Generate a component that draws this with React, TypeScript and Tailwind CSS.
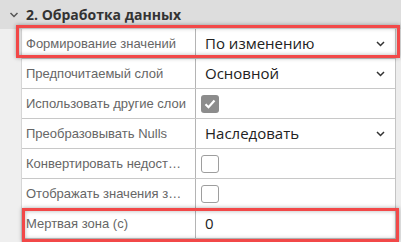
import React from 'react';

type Row =
  | { label: string; kind: 'select'; value: string }
  | { label: string; kind: 'text'; value: string }
  | { label: string; kind: 'check'; checked: boolean };

const rows: Row[] = [
  { label: 'Формирование значений', kind: 'select', value: 'По изменению' },
  { label: 'Предпочитаемый слой', kind: 'select', value: 'Основной' },
  { label: 'Использовать другие слои', kind: 'check', checked: true },
  { label: 'Преобразовывать Nulls', kind: 'select', value: 'Наследовать' },
  { label: 'Конвертировать недостоверные значения', kind: 'check', checked: false },
  { label: 'Отображать значения за будущее время', kind: 'check', checked: false },
  { label: 'Мертвая зона (с)', kind: 'text', value: '0' },
];

const Chevron = ({ className }: { className?: string }) => (
  <svg width="9" height="6" viewBox="0 0 9 6" className={className}>
    <path d="M1 1l3.5 3.5L8 1" fill="none" stroke="currentColor" strokeWidth="1.5" />
  </svg>
);

const Checkbox = ({ checked }: { checked: boolean }) =>
  checked ? (
    <div className="w-[18px] h-[18px] rounded-[3px] bg-[#8c8c8c] flex items-center justify-center">
      <svg width="12" height="10" viewBox="0 0 12 10">
        <path d="M1.5 5.2l3 3L10.5 1.5" fill="none" stroke="#fff" strokeWidth="2.2" />
      </svg>
    </div>
  ) : (
    <div className="w-[18px] h-[18px] rounded-[3px] bg-white border border-[#9e9e9e]" />
  );

export default function App() {
  return (
    <div className="relative w-[401px] h-[242px] overflow-hidden bg-[#ededed] font-['Open_Sans',sans-serif]">
      <div className="h-[29px] bg-[#dddddd] flex items-center">
        <Chevron className="ml-[9px] mt-[1px] text-[#555] w-[10px]" />
        <span className="ml-[7px] text-[14px] font-bold text-[#333] leading-none">2. Обработка данных</span>
      </div>

      <div className="flex">
        <div className="w-[22px] shrink-0 border-r border-[#d6d6d6] bg-[#efefef] h-[213px]" />
        <div className="w-[374px] border-r border-[#c4c4c4] bg-white">
          {rows.map((row) => (
            <div key={row.label} className="flex h-[30px] border-b border-[#c8c8c8]">
              <div className="w-[174px] shrink-0 border-r border-[#b4b4b4] flex items-center pl-[4px] pr-[7px]">
                <span className="truncate text-[13px] text-[#666] font-['Liberation_Sans',Arial,sans-serif]">
                  {row.label}
                </span>
              </div>
              <div className="flex-1 flex items-center pl-[5px] pr-[8px]">
                {row.kind === 'check' ? (
                  <Checkbox checked={row.checked} />
                ) : (
                  <span className="flex-1 pl-[4px] text-[15px] text-[#222]">{row.value}</span>
                )}
                {row.kind === 'select' && <Chevron className="text-[#333] mr-[2px]" />}
              </div>
            </div>
          ))}
        </div>
      </div>

      <div className="absolute left-[16px] top-[25px] w-[384px] h-[33px] border-[3px] border-[#f24848] shadow-[0_0_4px_rgba(0,0,0,0.35),inset_0_0_4px_rgba(0,0,0,0.3)]" />
      <div className="absolute left-[22px] top-[208px] w-[377px] h-[34px] border-[3px] border-[#f24848] shadow-[0_0_4px_rgba(0,0,0,0.35),inset_0_0_4px_rgba(0,0,0,0.3)]" />
    </div>
  );
}
